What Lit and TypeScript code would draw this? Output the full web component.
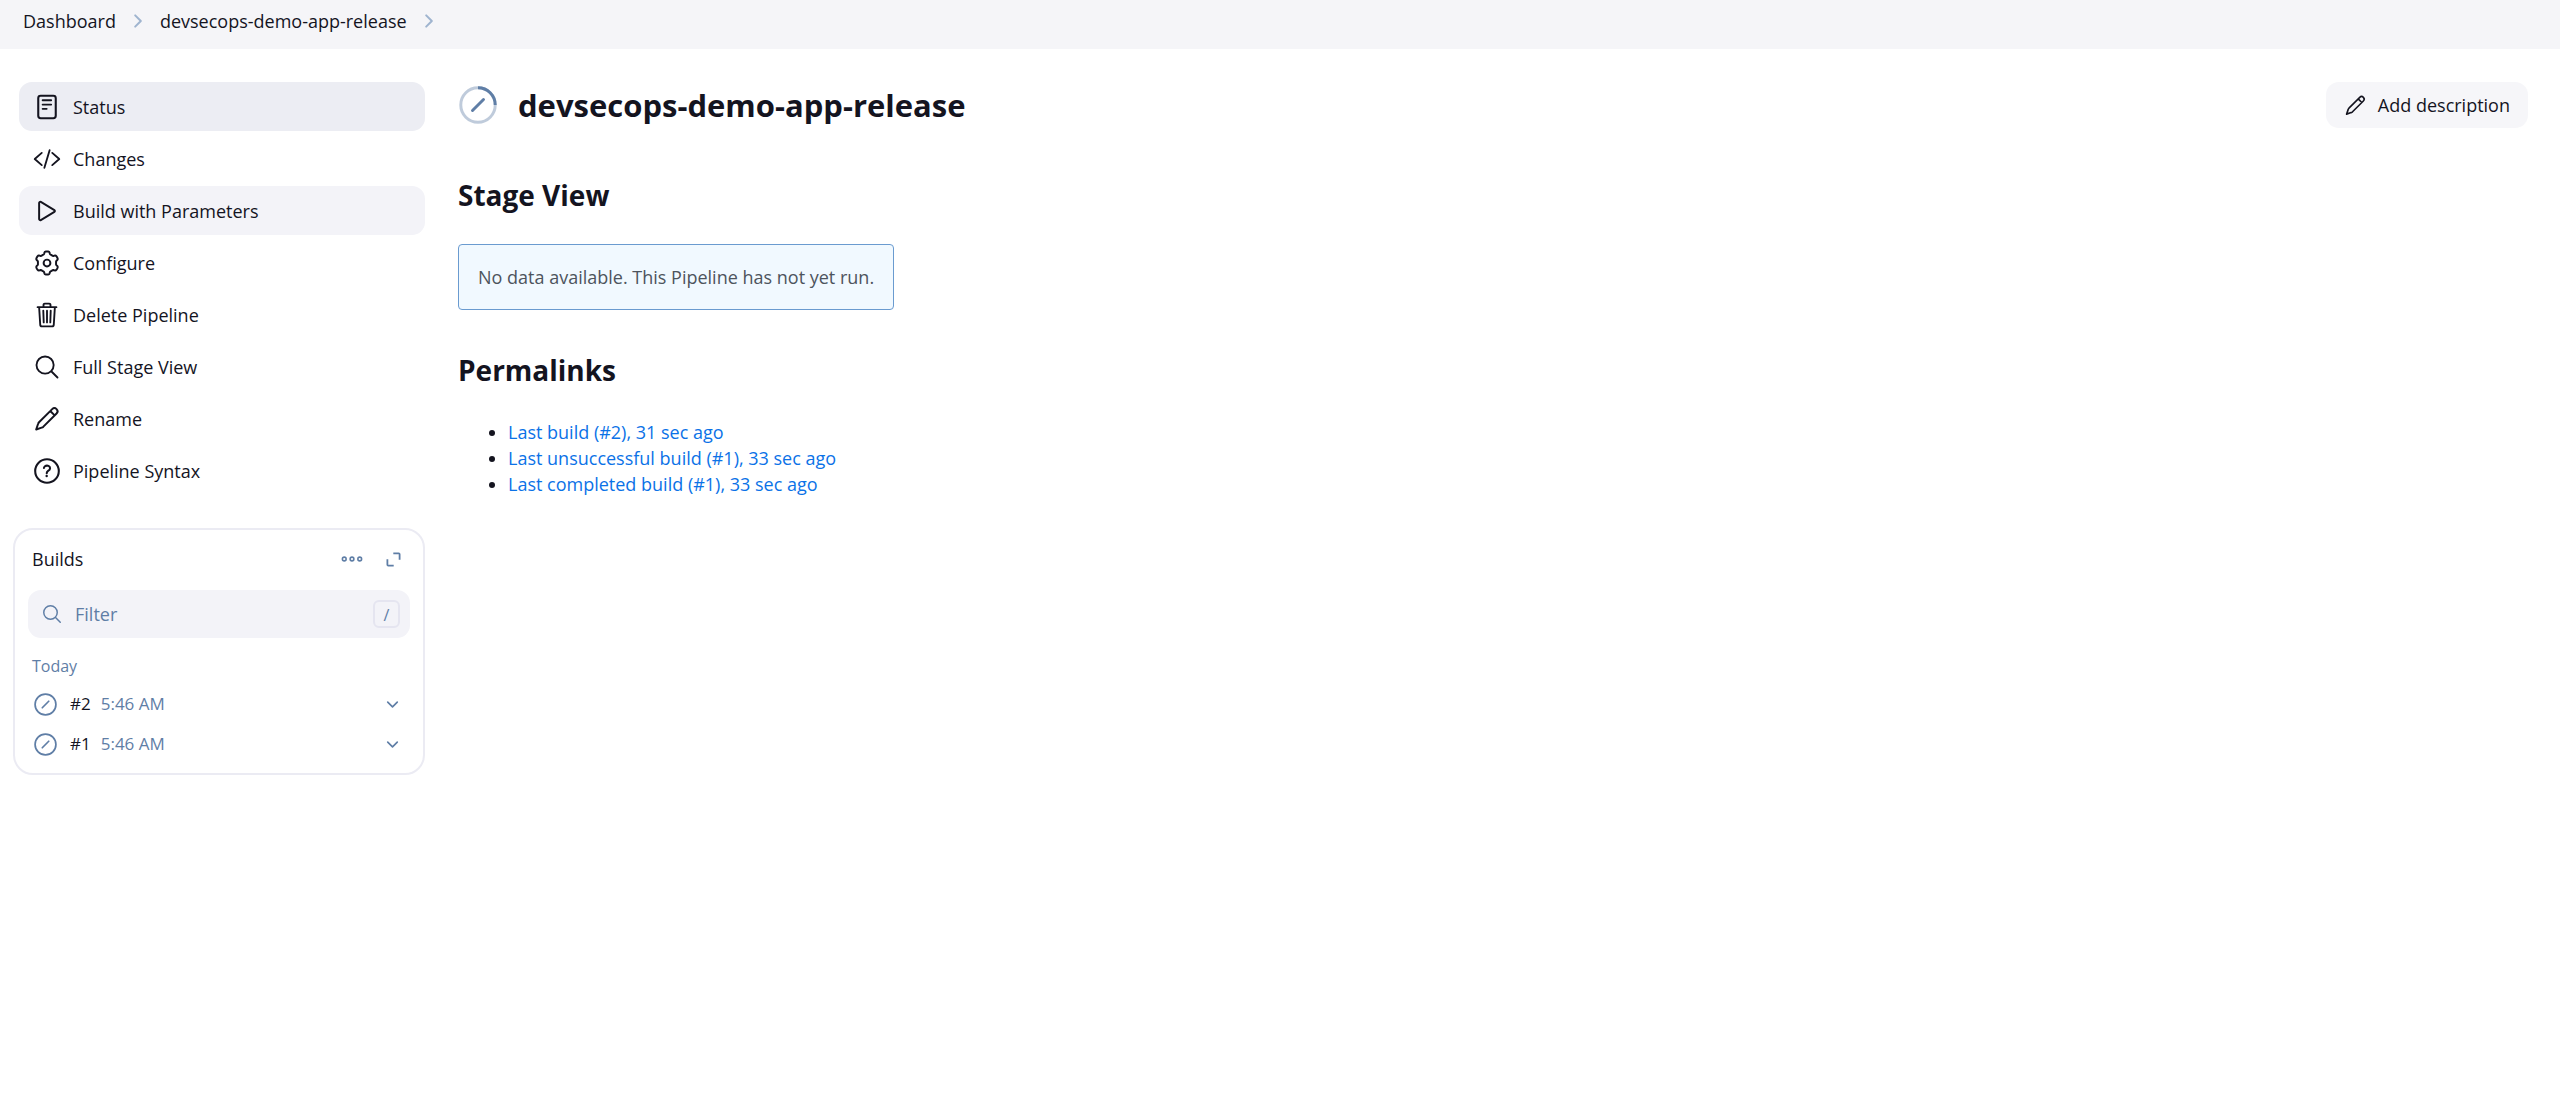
import { LitElement, html, css, svg } from "lit";
import { customElement, property } from "lit/decorators.js";

/* Six-lobed gear outline: the radius swings between hub and tooth, flattened at both ends. */
const gearPath = () => {
  const points: string[] = [];
  for (let i = 0; i < 180; i++) {
    const a = (i / 180) * Math.PI * 2;
    const r = 189 + 23 * (Math.tanh(2.4 * Math.cos(6 * a)) / Math.tanh(2.4));
    points.push(`${(256 + r * Math.sin(a)).toFixed(1)} ${(256 - r * Math.cos(a)).toFixed(1)}`);
  }
  return `M${points.join("L")}Z`;
};

const icons: Record<string, unknown> = {
  status: svg`<rect x="96" y="50" width="320" height="412" rx="44" stroke-width="38"/><path d="M176 132h156M176 212h156M176 290h74" stroke-width="34"/>`,
  changes: svg`<path d="M160 368L32 256l128-112M352 368l128-112-128-112M304 96l-96 320" stroke-width="34"/>`,
  play: svg`<path d="M112 111v290c0 17.44 17 28.52 31 20.16l247.9-148.37c12.12-7.25 12.12-26.33 0-33.58L143 90.84c-14-8.36-31 2.72-31 20.16z" stroke-width="36"/>`,
  settings: svg`<circle cx="256" cy="256" r="62" stroke-width="36"/><path d="${gearPath()}" stroke-width="36"/>`,
  trash: svg`<path d="M112 112l20 320c.95 18.49 14.4 32 32 32h184c17.67 0 30.87-13.51 32-32l20-320M84 112h344M192 112V72a23.93 23.93 0 0124-24h80a23.93 23.93 0 0124 24v40M256 176v216M188 176l8 216M324 176l-8 216" stroke-width="34"/>`,
  search: svg`<path d="M221.09 64a157.09 157.09 0 10157.09 157.09A157.1 157.1 0 00221.09 64zM338.29 338.29L448 448" stroke-width="34"/>`,
  pencil: svg`<path d="M58 448L92 348Q97 330 110 316L351 75A56 56 0 01431 155L190 396Q176 409 158 414ZM316 110L396 190" stroke-width="36"/>`,
  help: svg`<circle cx="256" cy="256" r="216" stroke-width="38"/><path d="M200 202.290s.84-17.5 19.57-32.57C230.680 160.770 244 158.180 256 158c10.930-.14 20.690 1.670 26.530 4.450 10 4.760 29.470 16.380 29.470 41.090 0 26-17 37.810-36.370 50.800S251 281.430 251 296" stroke-width="38"/><circle cx="250" cy="348" r="22" fill="currentColor" stroke="none"/>`,
  dots: svg`<circle cx="256" cy="256" r="44" stroke-width="36"/><circle cx="436" cy="256" r="44" stroke-width="36"/><circle cx="76" cy="256" r="44" stroke-width="36"/>`,
  expand: svg`<path d="M250 72h164q26 0 26 26v164M262 440H98q-26 0-26-26V250" stroke-width="54"/>`,
  aborted: svg`<circle cx="256" cy="256" r="232" stroke-width="38"/><path d="M328 184L184 328" stroke-width="38"/>`,
  running: svg`<circle cx="256" cy="256" r="232" stroke-width="40" opacity="0.4"/><path d="M256 24a232 232 0 01232 232" stroke-width="40" stroke-linecap="butt"/><path d="M330 182L182 330" stroke-width="40"/>`,
  right: svg`<path d="M184 112l144 144-144 144" stroke-width="52"/>`,
  down: svg`<path d="M112 184l144 144 144-144" stroke-width="50"/>`,
};

const icon = (name: string, cls = "") =>
  html`<svg class="icon ${cls}" viewBox="0 0 512 512" aria-hidden="true">${icons[name]}</svg>`;

const shared = css`
  * { box-sizing: border-box; }
  a { color: inherit; text-decoration: none; }
  button { font: inherit; color: inherit; border: 0; background: none; padding: 0; cursor: pointer; }
  .icon {
    display: block;
    flex: none;
    width: 28px;
    height: 28px;
    fill: none;
    stroke: currentColor;
    stroke-linecap: round;
    stroke-linejoin: round;
  }
`;

@customElement("task-list")
class TaskList extends LitElement {
  static styles = [shared, css`
    :host { display: block; }
    .tasks { display: flex; flex-direction: column; gap: 3px; padding-left: 6px; }
    .task {
      display: flex;
      align-items: center;
      gap: 12px;
      height: 49px;
      padding: 0 14px;
      border-radius: 13px;
    }
    .task.active { background: #ecedf3; }
    .task.hover, .task:hover:not(.active) { background: #f3f3f8; }
  `];

  tasks = [
    { icon: "status", label: "Status", state: "active" },
    { icon: "changes", label: "Changes" },
    { icon: "play", label: "Build with Parameters", state: "hover" },
    { icon: "settings", label: "Configure" },
    { icon: "trash", label: "Delete Pipeline" },
    { icon: "search", label: "Full Stage View" },
    { icon: "pencil", label: "Rename" },
    { icon: "help", label: "Pipeline Syntax" },
  ];

  render() {
    return html`<nav class="tasks">
      ${this.tasks.map((t) => html`<a class="task ${t.state ?? ""}" href="#">${icon(t.icon)}<span>${t.label}</span></a>`)}
    </nav>`;
  }
}

@customElement("build-history")
class BuildHistory extends LitElement {
  @property({ attribute: false }) builds = [
    { id: "#2", time: "5:46 AM" },
    { id: "#1", time: "5:46 AM" },
  ];

  static styles = [shared, css`
    :host { display: block; }
    .card { border: 2px solid #ebebf3; border-radius: 20px; padding: 7px 13px 9px; }
    .head { display: flex; align-items: center; gap: 7px; height: 44px; padding-left: 4px; }
    .title { flex: 1; font-size: 18px; font-weight: 400; margin: 0; }
    .tool { display: grid; place-items: center; width: 34px; height: 34px; color: #5f7ea6; }
    .i-dots { width: 22px; height: 22px; }
    .i-expand { width: 17px; height: 17px; stroke-linecap: butt; }
    .filter {
      display: flex;
      align-items: center;
      height: 48px;
      margin-top: 9px;
      padding: 0 10px 0 13px;
      border-radius: 13px;
      background: #f3f3f8;
      color: #5f7ea6;
    }
    .i-search { width: 22px; height: 22px; }
    .input {
      flex: 1;
      min-width: 0;
      border: 0;
      outline: 0;
      padding: 0 12px;
      background: none;
      font: inherit;
      color: inherit;
    }
    .input::placeholder { color: inherit; opacity: 1; }
    .key {
      display: grid;
      place-items: center;
      width: 27px;
      height: 28px;
      border: 2px solid #e5e5f0;
      border-radius: 6px;
      font: inherit;
      font-size: 16px;
    }
    .day { margin: 17px 4px 7px; font-size: 16px; line-height: 22px; font-weight: 400; color: #5f7ea6; }
    .list { list-style: none; margin: 0; padding: 0; }
    .build { display: flex; align-items: center; height: 40px; padding: 0 6px; font-size: 17px; }
    .i-aborted { width: 23px; height: 23px; color: #5f7ea6; overflow: visible; }
    .num { margin-left: 13px; }
    .time { flex: 1; margin-left: 10px; color: #5f7ea6; }
    .more { display: grid; place-items: center; width: 24px; height: 32px; color: #5f7ea6; }
    .i-down { width: 17px; height: 17px; }
  `];

  render() {
    return html`<section class="card">
      <header class="head">
        <h2 class="title">Builds</h2>
        <button class="tool" aria-label="Build options">${icon("dots", "i-dots")}</button>
        <button class="tool" aria-label="Expand">${icon("expand", "i-expand")}</button>
      </header>
      <div class="filter">
        ${icon("search", "i-search")}
        <input class="input" type="search" placeholder="Filter" aria-label="Filter builds" />
        <kbd class="key">/</kbd>
      </div>
      <h3 class="day">Today</h3>
      <ul class="list">
        ${this.builds.map((b) => html`<li class="build">
          ${icon("aborted", "i-aborted")}
          <a class="num" href="#">${b.id}</a>
          <a class="time" href="#">${b.time}</a>
          <button class="more" aria-label="Build ${b.id} menu">${icon("down", "i-down")}</button>
        </li>`)}
      </ul>
    </section>`;
  }
}

@customElement("app-root")
class AppRoot extends LitElement {
  static styles = [shared, css`
    :host {
      display: block;
      min-height: 100vh;
      background: #fff;
      color: #14141f;
      font-family: "Open Sans", "Noto Sans", sans-serif;
      font-size: 18px;
      line-height: 26px;
    }
    .crumbs { display: flex; align-items: center; height: 49px; padding: 0 23px 8px; background: #f5f5f8; }
    .i-right { width: 20px; height: 20px; margin: 0 12px; color: #9fb4cf; }
    .page { display: grid; grid-template-columns: 412px minmax(0, 1fr); gap: 33px; padding: 33px 32px 32px 13px; }
    .side { display: flex; flex-direction: column; gap: 33px; }
    .bar { display: flex; align-items: center; margin-bottom: 47px; }
    .i-running { width: 38px; height: 38px; margin: 0 21px 0 1px; color: #5f7ea6; overflow: visible; }
    .title { flex: 1; margin: 0; font-size: 31px; line-height: 44px; font-weight: 700; }
    .describe {
      display: flex;
      align-items: center;
      gap: 11px;
      height: 46px;
      padding: 0 18px;
      border-radius: 13px;
      background: #f6f6f9;
    }
    .i-pencil { width: 23px; height: 23px; }
    .heading { margin: 0 0 29px; font-size: 28px; line-height: 40px; font-weight: 700; }
    .note {
      width: fit-content;
      margin-bottom: 40px;
      padding: 19px;
      border: 1px solid #6a9bd0;
      border-radius: 4px;
      background: #f1f9ff;
      color: #4d545d;
    }
    .links { margin: 0; padding-left: 50px; }
    .link { color: #0b72e7; }
  `];

  links = [
    "Last build (#2), 31 sec ago",
    "Last unsuccessful build (#1), 33 sec ago",
    "Last completed build (#1), 33 sec ago",
  ];

  render() {
    return html`
      <nav class="crumbs" aria-label="Breadcrumb">
        <a href="#">Dashboard</a>${icon("right", "i-right")}
        <a href="#">devsecops-demo-app-release</a>${icon("right", "i-right")}
      </nav>
      <div class="page">
        <aside class="side"><task-list></task-list><build-history></build-history></aside>
        <main>
          <header class="bar">
            ${icon("running", "i-running")}
            <h1 class="title">devsecops-demo-app-release</h1>
            <button class="describe">${icon("pencil", "i-pencil")}<span>Add description</span></button>
          </header>
          <h2 class="heading">Stage View</h2>
          <div class="note">No data available. This Pipeline has not yet run.</div>
          <h2 class="heading">Permalinks</h2>
          <ul class="links">
            ${this.links.map((l) => html`<li><a class="link" href="#">${l}</a></li>`)}
          </ul>
        </main>
      </div>`;
  }
}
